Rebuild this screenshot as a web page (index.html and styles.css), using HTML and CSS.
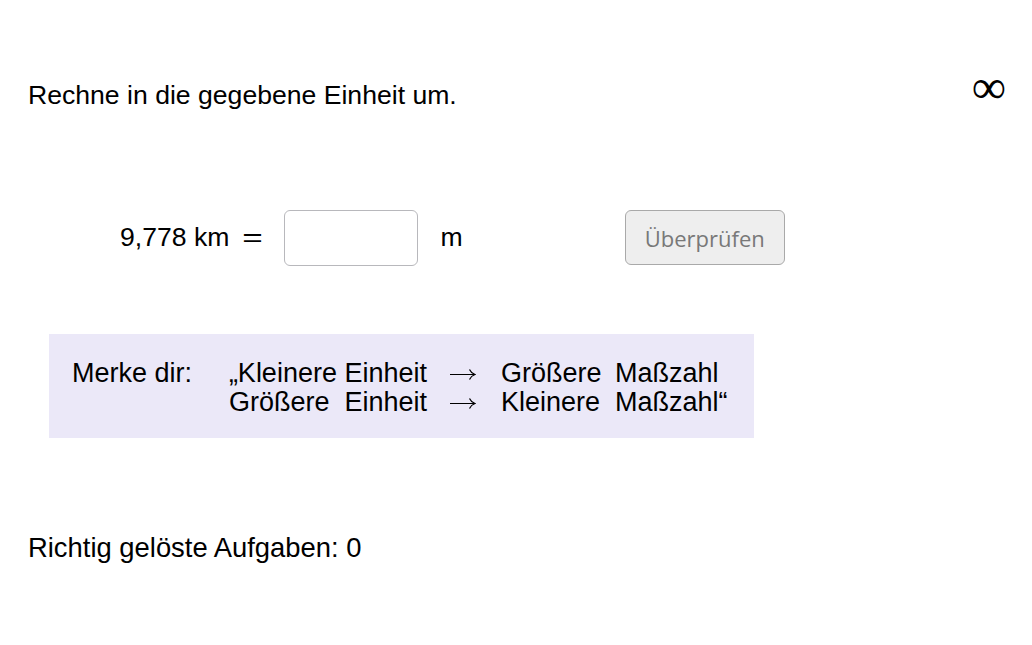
FILE: index.html
```html
<!DOCTYPE html>
<html lang="de">
<head>
<meta charset="utf-8">
<title>Einheiten umrechnen</title>
<link rel="stylesheet" href="styles.css">
</head>
<body>
<main class="applet">
  <header class="top">
    <p class="title">Rechne in die gegebene Einheit um.</p>
    <span class="infinity">∞</span>
  </header>

  <section class="task">
    <span class="value">9,778 km</span>
    <span class="eq">=</span>
    <input class="answer" type="text" aria-label="Antwort">
    <span class="unit">m</span>
    <button class="check" type="button">Überprüfen</button>
  </section>

  <section class="note">
    <div class="note-grid">
      <span class="label">Merke dir:</span>
      <span class="left">„Kleinere Einheit</span>
      <span class="arrow"><svg width="26" height="12" viewBox="0 0 26 12"><path d="M0 6.5H24.5M19.5 1.5Q21 5 25 6.5Q21 8 19.5 11.5" fill="none" stroke="#000" stroke-width="1.2"/></svg></span>
      <span class="w1">Größere</span>
      <span class="w2">Maßzahl</span>

      <span class="label"></span>
      <span class="left">Größere&nbsp; Einheit</span>
      <span class="arrow"><svg width="26" height="12" viewBox="0 0 26 12"><path d="M0 6.5H24.5M19.5 1.5Q21 5 25 6.5Q21 8 19.5 11.5" fill="none" stroke="#000" stroke-width="1.2"/></svg></span>
      <span class="w1">Kleinere</span>
      <span class="w2">Maßzahl“</span>
    </div>
  </section>

  <p class="score">Richtig gelöste Aufgaben: 0</p>
</main>
</body>
</html>
```

FILE: styles.css
```css
html, body {
  margin: 0;
  padding: 0;
  background: #ffffff;
}

body {
  font-family: "Liberation Sans", Arial, sans-serif;
  color: #000;
}

.applet {
  width: 1032px;
  height: 645px;
  box-sizing: border-box;
  padding: 0 0 0 28px;
}

.top {
  display: flex;
  justify-content: space-between;
  align-items: flex-start;
  padding-top: 78px;
  padding-right: 26px;
}

.title {
  margin: 0;
  font-size: 26.6px;
  line-height: 34px;
}

.infinity {
  font-family: "Liberation Serif", serif;
  font-size: 48px;
  line-height: 24px;
  margin-top: -3px;
}

.task {
  display: flex;
  align-items: center;
  margin-top: 97px;
  margin-left: 92px;
  height: 57px;
}

.value {
  font-size: 26.6px;
  white-space: nowrap;
}

.eq {
  margin-left: 16px;
  font-size: 26px;
  display: inline-block;
  transform: scaleX(1.35);
}

.answer {
  margin-left: 23px;
  width: 134px;
  height: 56px;
  box-sizing: border-box;
  border: 1px solid #b8b8bc;
  border-radius: 6px;
  background: #fff;
  outline: none;
}

.unit {
  margin-left: 23px;
  font-size: 26.6px;
}

.check {
  margin-left: 162px;
  width: 160px;
  height: 55px;
  box-sizing: border-box;
  border: 1px solid #a9a9a9;
  border-radius: 6px;
  background: #eeeeee;
  color: #787878;
  font-family: "Open Sans", sans-serif;
  font-size: 22px;
  padding: 0;
}

.note {
  margin-top: 68px;
  margin-left: 21px;
  width: 705px;
  height: 104px;
  box-sizing: border-box;
  background: #ebe8f8;
  padding: 25px 0 0 23px;
}

.note-grid {
  display: grid;
  grid-template-columns: 153px 202px 74px 114px auto;
  font-size: 27px;
  line-height: 29px;
  white-space: nowrap;
}

.left {
  text-align: right;
}

.arrow {
  padding-left: 23px;
  display: flex;
  align-items: center;
}

.score {
  margin: 93px 0 0;
  font-size: 27.4px;
  line-height: 34px;
}
```
